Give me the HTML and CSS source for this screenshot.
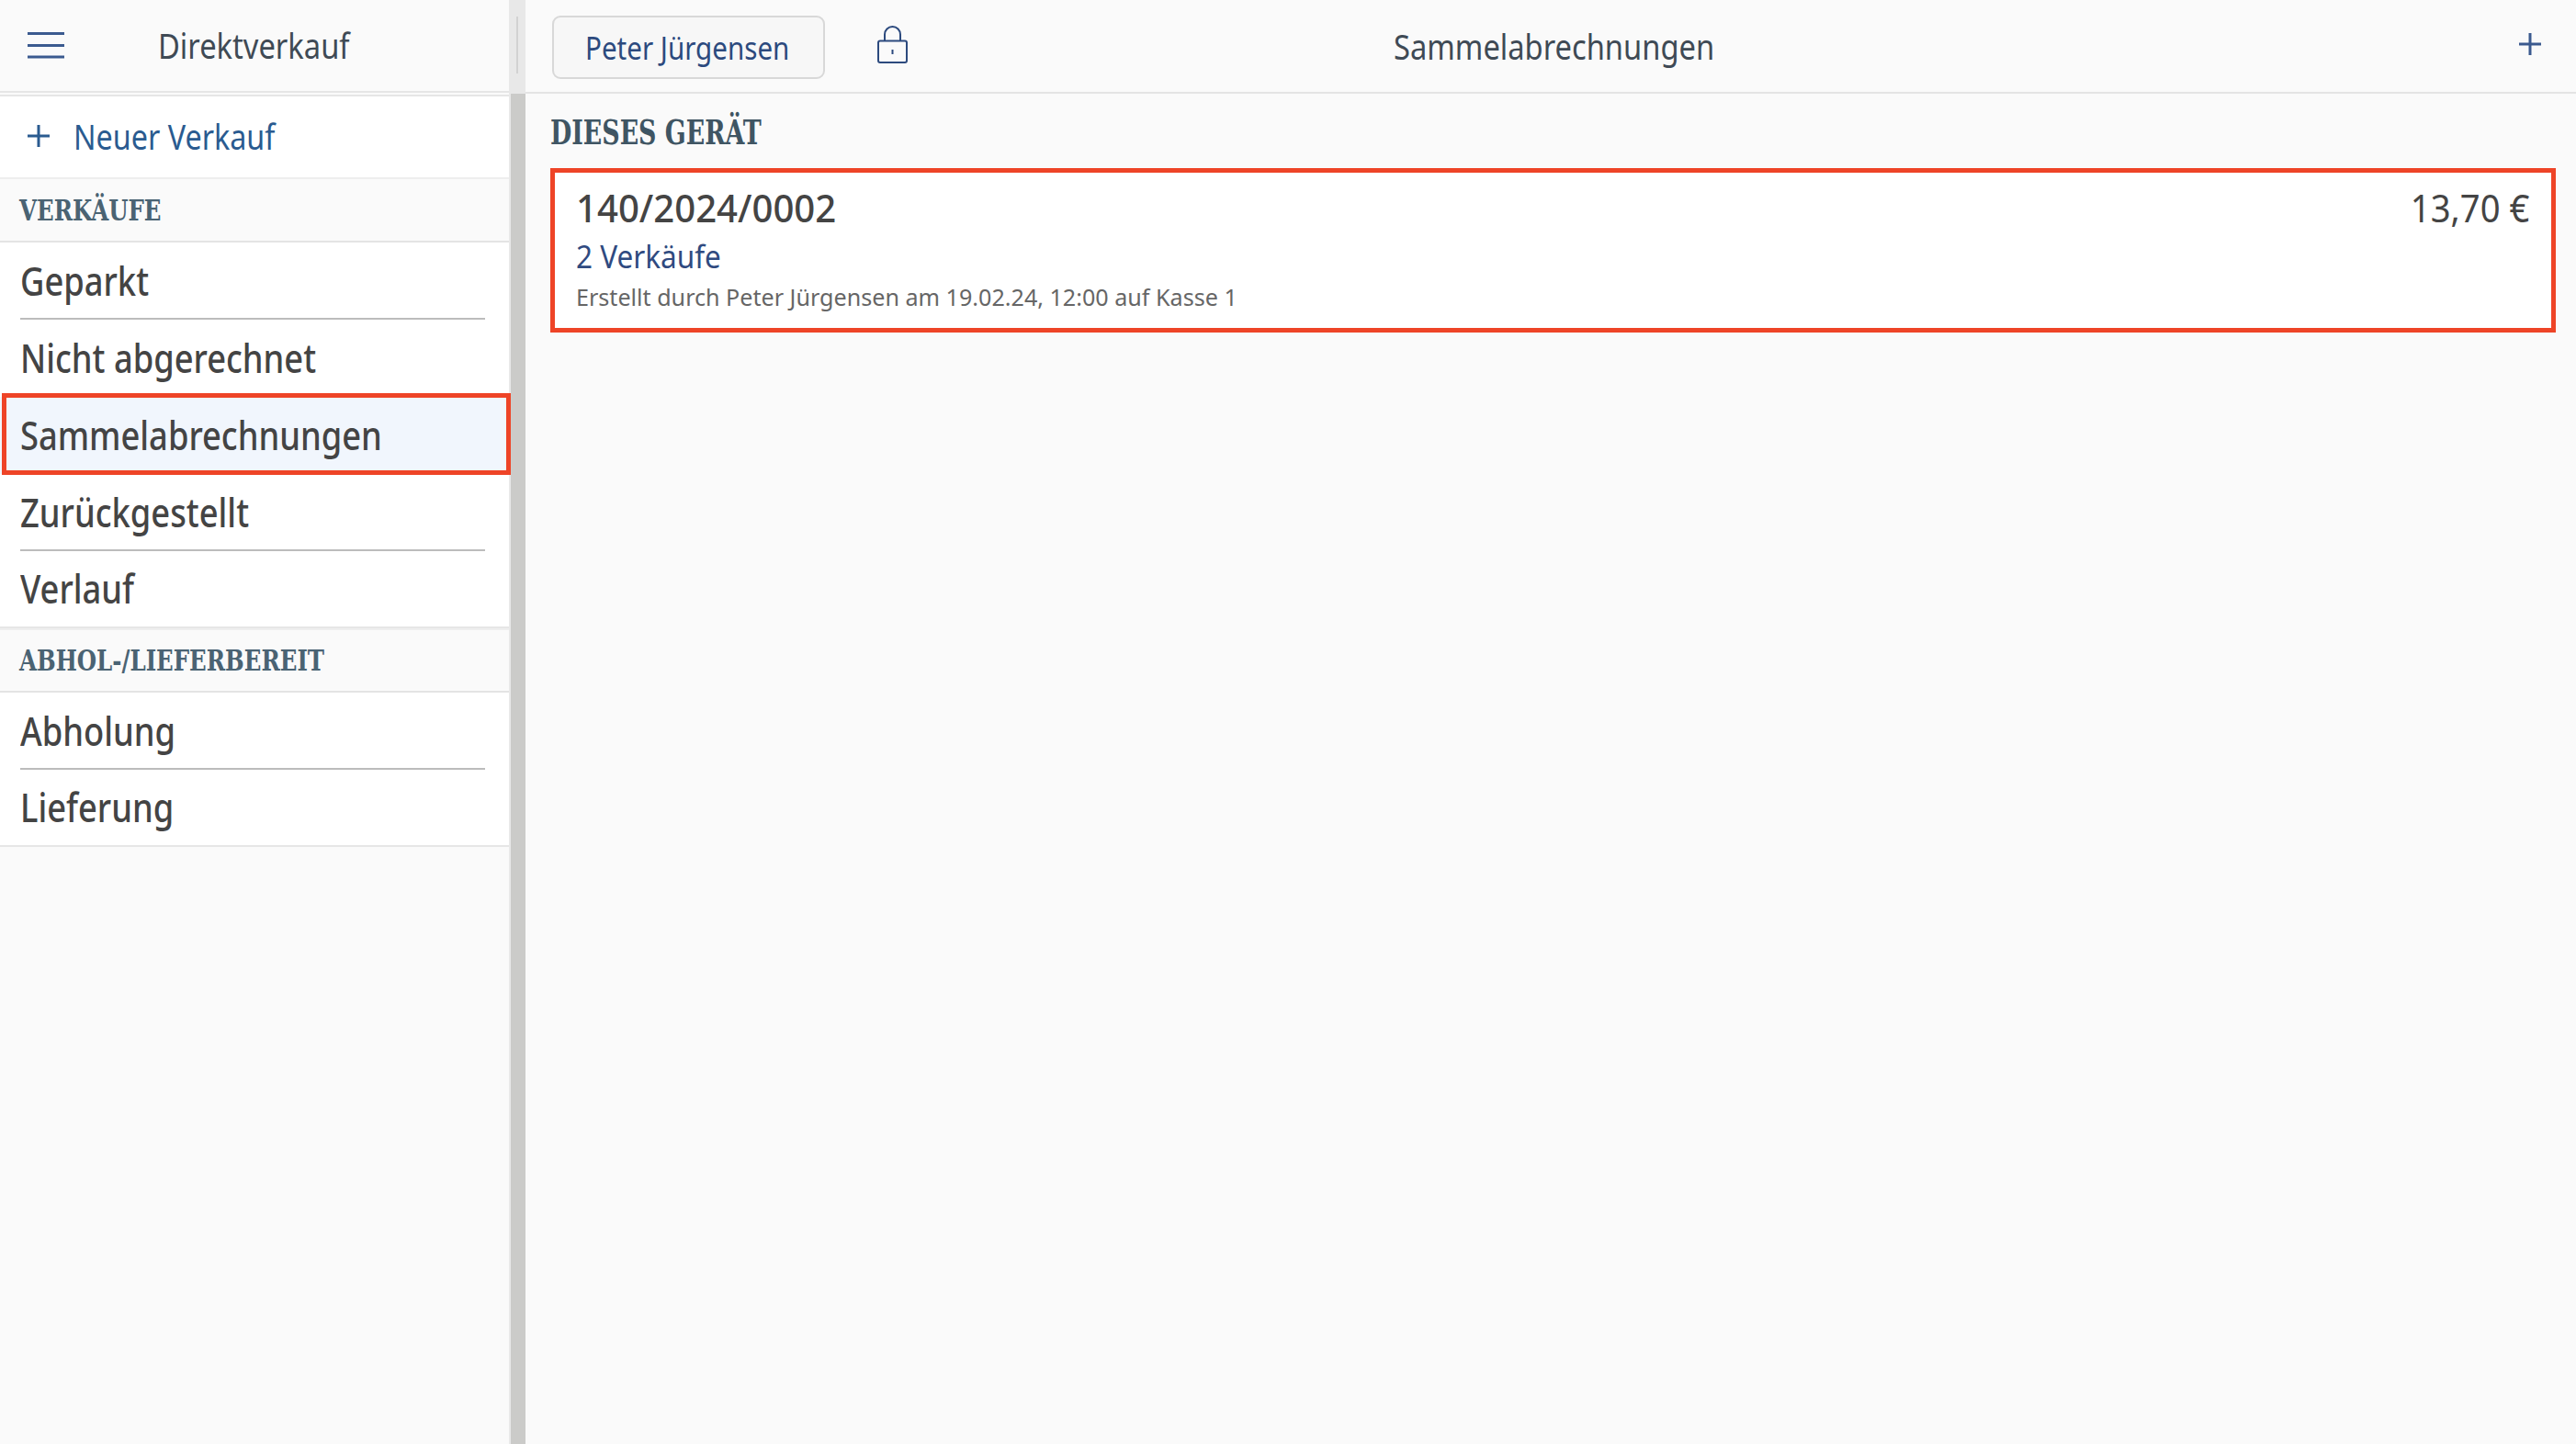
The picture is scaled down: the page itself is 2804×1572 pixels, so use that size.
FILE: index.html
```html
<!DOCTYPE html>
<html lang="de">
<head>
  <meta charset="UTF-8" />
  <title>Sammelabrechnungen</title>
  <link rel="stylesheet" href="styles.css">
</head>
<body>
  <div class="app">
    <!-- SEITENLEISTE -->
    <aside class="sidebar">
      <header class="side-head">
        <svg class="burger" width="40" height="30" viewBox="0 0 40 30"><path d="M0 2.5h40M0 15.5h40M0 28h40" stroke="#3b5a8f" stroke-width="3" fill="none"/></svg>
        <span class="side-title txt">Direktverkauf</span>
      </header>
      <a class="new-sale">
        <svg class="plus" width="24" height="24" viewBox="0 0 24 24"><path d="M12 0v24M0 12h24" stroke="#2a5b90" stroke-width="3" fill="none"/></svg>
        <span class="txt">Neuer Verkauf</span>
      </a>
      <h3 class="section first"><span class="slab">VERKÄUFE</span></h3>
      <ul class="items">
        <li class="item"><span class="txt">Geparkt</span></li>
        <li class="item"><span class="txt">Nicht abgerechnet</span></li>
        <li class="item active"><span class="txt">Sammelabrechnungen</span></li>
        <li class="item"><span class="txt">Zurückgestellt</span></li>
        <li class="item last"><span class="txt">Verlauf</span></li>
      </ul>
      <h3 class="section"><span class="slab">ABHOL-/LIEFERBEREIT</span></h3>
      <ul class="items">
        <li class="item"><span class="txt">Abholung</span></li>
        <li class="item last"><span class="txt">Lieferung</span></li>
      </ul>
    </aside>

    <div class="divider"><div class="divider-top"><i></i></div></div>

    <!-- HAUPTBEREICH -->
    <main class="main">
      <header class="main-head">
        <button class="user"><span class="txt">Peter Jürgensen</span></button>
        <svg class="lock" width="33" height="41" viewBox="0 0 33 41">
          <path d="M8 17V9.5a8.5 8.5 0 0 1 17 0V17" fill="none" stroke="#2c4a7e" stroke-width="2"/>
          <rect x="1" y="16.5" width="31" height="23.5" rx="2" fill="none" stroke="#2c4a7e" stroke-width="2"/>
          <path d="M16.500 26v5" stroke="#2c4a7e" stroke-width="2"/>
        </svg>
        <span class="main-title txt">Sammelabrechnungen</span>
        <svg class="plus-right" width="24" height="24" viewBox="0 0 24 24"><path d="M12 0v24M0 12h24" stroke="#3b5a8f" stroke-width="3" fill="none"/></svg>
      </header>
      <div class="content">
        <h2 class="device"><span class="slab">DIESES GERÄT</span></h2>
        <div class="card">
          <div class="card-top">
            <span class="number txt">140/2024/0002</span>
            <span class="amount txt">13,70 €</span>
          </div>
          <div class="count"><span class="txt">2 Verkäufe</span></div>
          <div class="meta"><span class="txt">Erstellt durch Peter Jürgensen am 19.02.24, 12:00 auf Kasse 1</span></div>
        </div>
      </div>
    </main>
  </div>
</body>
</html>
```
FILE: styles.css
```css
/* Reset */
* {
  margin: 0;
  padding: 0;
  box-sizing: border-box;
}

body {
  background: #fafafa;
  font-family: "Noto Sans", "Open Sans", sans-serif;
  font-stretch: 75%;
  color: #444;
}

ul {
  list-style: none;
}

/* Schmale Schrift: Stauchung der Laufweite */
.txt {
  display: inline-block;
  white-space: nowrap;
  transform: scaleX(0.86);
  transform-origin: left center;
}

.slab {
  display: inline-block;
  white-space: nowrap;
  font-family: "DejaVu Serif", serif;
  font-stretch: condensed;
  font-weight: 700;
  transform: scaleX(0.85);
  transform-origin: left center;
}

.app {
  display: flex;
  height: 100vh;
  overflow: hidden;
}

/* Seitenleiste */
.sidebar {
  width: 554px;
  flex: none;
}

.side-head {
  height: 105px;
  display: flex;
  align-items: center;
  padding: 0 0 5px 30px;
  border-bottom: 2px solid #e6e6e6;
  box-shadow: inset 0 -2px 0 #fafafa, inset 0 -4px 0 #e6e6e6;
}

.side-title {
  margin-left: 102px;
  font-size: 38px;
  color: #3f4a55;
}

.new-sale {
  height: 88px;
  display: flex;
  align-items: center;
  padding: 0 0 2px 30px;
  background: #fff;
  color: #2a5b90;
  font-size: 38px;
}

.new-sale .plus {
  margin-right: 26px;
}

.new-sale .txt {
  transform: scaleX(0.85);
}

.section {
  height: 70px;
  display: flex;
  align-items: center;
  padding-left: 21px;
  border-top: 2px solid #eee;
  border-bottom: 2px solid #e4e4e4;
  font-size: 32px;
  color: #4a6373;
}

.section.first {
  height: 71px;
}

.item {
  height: 84px;
  display: flex;
  align-items: center;
  padding: 0 0 2px 22px;
  background: #fff;
  font-size: 44px;
  font-weight: 500;
  position: relative;
}

.item .txt {
  transform: scaleX(0.825);
}

.item::before {
  content: "";
  position: absolute;
  left: 22px;
  right: 26px;
  bottom: 0;
  height: 2px;
  background: #bcbcbc;
}

.item.last {
  border-bottom: 2px solid #e6e6e6;
}

.item.last::before,
.item.active::before {
  display: none;
}

.item.active {
  background: #f1f6fd;
}

/* Rote Markierung liegt ueber der Zeile */
.item.active::after {
  content: "";
  position: absolute;
  left: 2px;
  right: -2px;
  top: -4px;
  bottom: -1px;
  border: 5px solid #ee4427;
  z-index: 2;
}

.divider {
  width: 18px;
  flex: none;
  background: #cbcbc9;
  border-left: 2px solid #e8e8e8;
}

.divider-top {
  height: 102px;
  margin-left: -2px;
  background: #e8e8e8;
  padding: 18px 0 0 8px;
}

.divider-top i {
  display: block;
  width: 2px;
  height: 62px;
  background: #d2d2d2;
}

/* Hauptbereich */
.main {
  flex: 1;
  min-width: 0;
}

.main-head {
  height: 102px;
  display: flex;
  align-items: center;
  padding: 0 38px 0 29px;
  border-bottom: 2px solid #e4e4e4;
  position: relative;
}

.user {
  width: 297px;
  height: 69px;
  margin-top: 2px;
  background: #f7f7f7;
  border: 2px solid #d8d8d8;
  border-radius: 9px;
  font: inherit;
  font-size: 35px;
  color: #2c4a7e;
  display: flex;
  align-items: center;
  padding-left: 34px;
}

.user .txt {
  transform: scaleX(0.845);
}

.lock {
  margin-left: 57px;
  margin-top: -4px;
}

.main-title {
  position: absolute;
  left: 945px;
  top: 24px;
  font-size: 38px;
  color: #3f4a55;
}

.plus-right {
  margin-left: auto;
  margin-top: -4px;
}

.content {
  padding: 15px 22px 0 27px;
}

.device {
  height: 66px;
  font-size: 38px;
  color: #3f5563;
  line-height: 50px;
}

.device .slab {
  transform: scaleX(0.785);
}

.card {
  height: 179px;
  background: #fff;
  border: 5px solid #ee4427;
  padding: 13px 24px 0 23px;
}

.card-top {
  display: flex;
  justify-content: space-between;
  font-size: 42px;
  line-height: 50px;
}

.number {
  font-weight: 500;
  transform: scaleX(0.955);
}

.amount {
  transform: scaleX(0.91);
  transform-origin: right center;
}

.count {
  margin-top: 3px;
  font-size: 35px;
  line-height: 50px;
  color: #2f4a80;
}

.count .txt {
  transform: scaleX(0.9);
}

.meta {
  margin-top: 1px;
  font-size: 26px;
  line-height: 36px;
  color: #666;
}

.meta .txt {
  transform: scaleX(0.966);
}
```
